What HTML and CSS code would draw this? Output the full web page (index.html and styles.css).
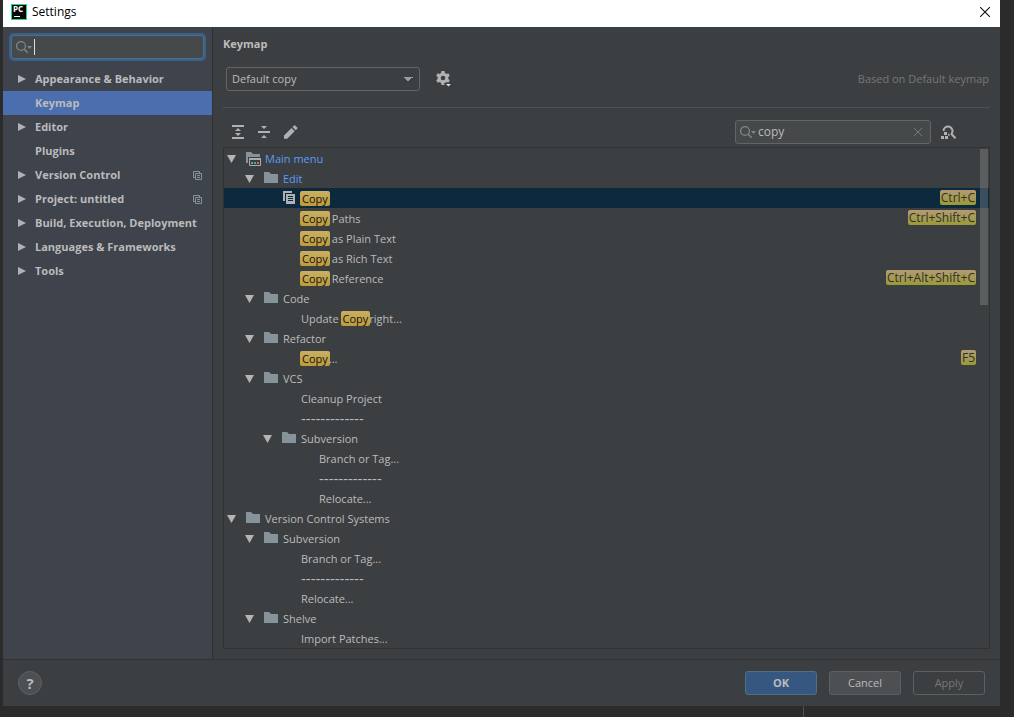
FILE: index.html
```
<!DOCTYPE html>
<html lang="en">
<head>
<meta charset="utf-8">
<title>Settings</title>
<link rel="stylesheet" href="styles.css">
</head>
<body>
<svg class="sprite" aria-hidden="true">
  <symbol id="right" viewBox="0 0 8 8"><path d="M0 0v8l8-4z" fill="#afb1b3"/></symbol>
  <symbol id="down" viewBox="0 0 9 8"><path d="M0 0h9L4.500 8z" fill="#b4b4b4"/></symbol>
  <symbol id="folder" viewBox="0 0 14 11"><path d="M0 0h5l2 2h7v9H0z" fill="#87939a"/></symbol>
  <symbol id="menufolder" viewBox="0 0 16 14"><path d="M0 0h5l2 2h7v3H2v6H0z" fill="#87939a"/><path d="M3.500 6.500h11v7h-11z" fill="none" stroke="#a5adb2"/><path d="M3 6h12v2H3z" fill="#a5adb2"/><path d="M5 10h2v2H5z" fill="#62b543"/><path d="M8 10h2v2H8z" fill="#40a0d8"/><path d="M11 10h2v2h-2z" fill="#d86a38"/></symbol>
  <symbol id="copy" viewBox="0 0 12 13"><path d="M0 0h9v2H2v8H0z" fill="#afb1b3"/><path d="M3 3h9v10H3z" fill="#afb1b3"/><path d="M5 5.500h5M5 7.500h5M5 9.500h5" stroke="#0d293e"/></symbol>
  <symbol id="scope" viewBox="0 0 9 9"><path d="M.5 6.500v-6h6V2M2.500 2.500h6v6h-6zM4 4.500h3M4 6.500h3M.5 6.500H2" fill="none" stroke="#87939a"/></symbol>
  <symbol id="search" viewBox="0 0 16 13"><circle cx="5" cy="5" r="4.400" fill="none" stroke="#7c878d" stroke-width="1.300"/><path d="M8.200 8.200l3.500 3.600" stroke="#7c878d" stroke-width="1.500"/><path d="M11 5h5l-2.500 3z" fill="#7c878d"/></symbol>
</svg>
<div class="dialog">
  <header class="titlebar">
    <svg class="logo" viewBox="0 0 16 16"><path d="M0 0h16v16H0z" fill="#21d789"/><path d="M1 1h14v14H1z" fill="#080808"/><text x="2" y="8" class="logo-text">PC</text><path d="M3 12h6v1H3z" fill="#fff"/></svg>
    <span>Settings</span>
    <button class="close" aria-label="Close"><svg width="10" height="10" viewBox="0 0 10 10"><path d="M0 0l10 10M10 0L0 10" stroke="#111" stroke-width="1.100"/></svg></button>
  </header>
  <div class="body">
    <nav class="sidebar">
      <label class="field focused"><svg class="i-search"><use href="#search"/></svg><span class="caret"></span><input type="text" aria-label="Search settings"></label>
      <ul class="nav">
        <li><svg class="i-right"><use href="#right"/></svg><a href="#">Appearance &amp; Behavior</a></li>
        <li class="current"><a href="#">Keymap</a></li>
        <li><svg class="i-right"><use href="#right"/></svg><a href="#">Editor</a></li>
        <li><a href="#">Plugins</a></li>
        <li><svg class="i-right"><use href="#right"/></svg><a href="#">Version Control</a><svg class="i-scope"><use href="#scope"/></svg></li>
        <li><svg class="i-right"><use href="#right"/></svg><a href="#">Project: untitled</a><svg class="i-scope"><use href="#scope"/></svg></li>
        <li><svg class="i-right"><use href="#right"/></svg><a href="#">Build, Execution, Deployment</a></li>
        <li><svg class="i-right"><use href="#right"/></svg><a href="#">Languages &amp; Frameworks</a></li>
        <li><svg class="i-right"><use href="#right"/></svg><a href="#">Tools</a></li>
      </ul>
    </nav>
    <main class="content">
      <h1>Keymap</h1>
      <div class="scheme">
        <select aria-label="Keymap scheme"><option>Default copy</option></select>
        <button class="tool" aria-label="Scheme actions"><svg width="16" height="16" viewBox="0 0 16 16"><path d="M5.500 0h3l.4 2 1.500.9 1.900-.7 1.500 2.600-1.500 1.300v1.800l1.500 1.300-1.500 2.600-1.900-.7-1.500.9-.4 2h-3l-.4-2-1.500-.9-1.900.7L.2 9.200l1.500-1.300V6.100L.2 4.800l1.500-2.600 1.900.7L5.100 2zM7 4.700a2.300 2.300 0 100 4.600 2.300 2.300 0 000-4.600z" fill="#afb1b3" fill-rule="evenodd"/><path d="M10 13h5l-2.500 2.500z" fill="#ddd" stroke="#3c3f41" stroke-width="2" paint-order="stroke"/></svg></button>
        <span class="based">Based on Default keymap</span>
      </div>
      <div class="toolbar">
        <button class="tool" aria-label="Expand all"><svg width="12" height="14" viewBox="0 0 12 14"><path d="M0 0h12v2H0zM0 12h12v2H0zM3 6l3-3 3 3zM3 8h6l-3 3z" fill="#afb1b3"/></svg></button>
        <button class="tool" aria-label="Collapse all"><svg width="12" height="14" viewBox="0 0 12 14"><path d="M0 6h12v2H0zM3 1h6L6 4zM3 13l3-3 3 3z" fill="#afb1b3"/></svg></button>
        <button class="tool" aria-label="Edit shortcut"><svg width="14" height="14" viewBox="0 0 14 14"><path d="M0 10.500L7.500 3l3.200 3.200L3.200 13.700H0zM8.500 2L10 .5q.6-.6 1.200 0l2 2q.6.600 0 1.200l-1.500 1.500z" fill="#afb1b3"/></svg></button>
        <label class="field filter"><svg class="i-search"><use href="#search"/></svg><input type="text" value="copy" aria-label="Filter actions"><svg width="8" height="8" viewBox="0 0 8 8"><path d="M0 0l8 8M8 0L0 8" stroke="#72777a"/></svg></label>
        <button class="tool" aria-label="Find by shortcut"><svg width="16" height="15" viewBox="0 0 16 15"><path d="M2.500 6a4.500 4.500 0 118 2.800M7 9.800l1.500 0M10 8.500l4.500 4.800" fill="none" stroke="#afb1b3" stroke-width="2"/><path d="M3 7h3v3H3zM0 11h3v3H0zM4 11h3v3H4z" fill="#afb1b3"/></svg></button>
      </div>
      <div class="tree">
        <ul>
          <li class="l0 changed"><svg class="i-down"><use href="#down"/></svg><svg class="i-menu"><use href="#menufolder"/></svg>Main menu</li>
          <li class="l1 changed"><svg class="i-down"><use href="#down"/></svg><svg class="i-folder"><use href="#folder"/></svg>Edit</li>
          <li class="l2 selected"><svg class="i-copy"><use href="#copy"/></svg><mark>Copy</mark><kbd>Ctrl+C</kbd></li>
          <li class="l2 leaf"><mark>Copy</mark><span class="rest">Paths</span><kbd>Ctrl+Shift+C</kbd></li>
          <li class="l2 leaf"><mark>Copy</mark><span class="rest">as Plain Text</span></li>
          <li class="l2 leaf"><mark>Copy</mark><span class="rest">as Rich Text</span></li>
          <li class="l2 leaf"><mark>Copy</mark><span class="rest">Reference</span><kbd>Ctrl+Alt+Shift+C</kbd></li>
          <li class="l1"><svg class="i-down"><use href="#down"/></svg><svg class="i-folder"><use href="#folder"/></svg>Code</li>
          <li class="l2 leaf"><span>Update&nbsp;</span><mark>Copy</mark>right...</li>
          <li class="l1"><svg class="i-down"><use href="#down"/></svg><svg class="i-folder"><use href="#folder"/></svg>Refactor</li>
          <li class="l2 leaf"><mark>Copy</mark>...<kbd>F5</kbd></li>
          <li class="l1"><svg class="i-down"><use href="#down"/></svg><svg class="i-folder"><use href="#folder"/></svg>VCS</li>
          <li class="l2 leaf">Cleanup Project</li>
          <li class="l2 leaf dashes">-------------</li>
          <li class="l2"><svg class="i-down"><use href="#down"/></svg><svg class="i-folder"><use href="#folder"/></svg>Subversion</li>
          <li class="l3 leaf">Branch or Tag...</li>
          <li class="l3 leaf dashes">-------------</li>
          <li class="l3 leaf">Relocate...</li>
          <li class="l0"><svg class="i-down"><use href="#down"/></svg><svg class="i-folder"><use href="#folder"/></svg>Version Control Systems</li>
          <li class="l1"><svg class="i-down"><use href="#down"/></svg><svg class="i-folder"><use href="#folder"/></svg>Subversion</li>
          <li class="l2 leaf">Branch or Tag...</li>
          <li class="l2 leaf dashes">-------------</li>
          <li class="l2 leaf">Relocate...</li>
          <li class="l1"><svg class="i-down"><use href="#down"/></svg><svg class="i-folder"><use href="#folder"/></svg>Shelve</li>
          <li class="l2 leaf">Import Patches...</li>
        </ul>
        <div class="thumb"></div>
      </div>
    </main>
  </div>
  <footer class="footer">
    <button class="help" aria-label="Help">?</button>
    <button class="btn primary">OK</button>
    <button class="btn">Cancel</button>
    <button class="btn" disabled>Apply</button>
  </footer>
</div>
<div class="behind"></div>
</body>
</html>
```
FILE: styles.css
```
* { box-sizing: border-box; }
body {
  margin: 0;
  height: 100vh;
  display: flex;
  flex-direction: column;
  padding: 0 14px 0 3px;
  background: #2b2b2b;
  color: #bbbbbb;
  font: 11px/16px "Open Sans", "Noto Sans", sans-serif;
  overflow: hidden;
}
button, input, select { font: inherit; color: inherit; }
button { padding: 0; border: 0; background: none; }
ul { list-style: none; margin: 0; padding: 0; }
a { color: inherit; text-decoration: none; }
svg { flex: none; display: block; }
.sprite { position: absolute; width: 0; height: 0; }

.dialog { flex: 1; min-height: 0; display: flex; flex-direction: column; background: #3c3f41; }
.titlebar {
  display: flex;
  align-items: center;
  gap: 5px;
  height: 27px;
  padding: 0 10px 3px 8px;
  background: #fff;
  color: #000;
  font-size: 12px;
}
.logo { width: 16px; height: 16px; }
.logo-text { font: bold 8px "Open Sans", sans-serif; fill: #fff; }
.close { margin-left: auto; }

.body { flex: 1; min-height: 0; display: flex; }
.sidebar { flex: none; width: 210px; background: #3f434c; border-right: 1px solid #323232; }
.field {
  display: flex;
  align-items: center;
  height: 24px;
  padding: 0 8px 0 4px;
  background: #45494a;
  border: 1px solid #646464;
  border-radius: 3px;
}
.field input { flex: 1; min-width: 0; padding: 0; border: 0; outline: 0; background: none; font-size: 12px; }
.focused { margin: 8px 8px; border-color: #466d94; box-shadow: 0 0 0 2px #3d6185; }
.caret { width: 1px; height: 16px; margin-left: 2px; background: #ddd; }
.i-search { width: 16px; height: 13px; }
.nav li { display: flex; align-items: center; height: 24px; padding: 0 10px 0 32px; font-weight: bold; white-space: nowrap; }
.nav .i-right { width: 8px; height: 8px; margin: 0 9px 0 -17px; }
.nav .current { background: #4b6eaf; }
.i-scope { width: 9px; height: 9px; margin-left: auto; }

.content { flex: 1; min-width: 0; display: flex; flex-direction: column; padding: 9px 10px 10px; }
h1 { margin: 0; font-size: 11px; line-height: 16px; }
.scheme { display: flex; align-items: center; height: 56px; padding: 0 1px 1px 3px; border-bottom: 1px solid #515151; }
select {
  width: 194px;
  height: 24px;
  padding: 0 5px;
  appearance: none;
  border: 1px solid #646464;
  border-radius: 3px;
  background: conic-gradient(from -45deg at 50% 100%, #9a9da0 90deg, transparent 0) no-repeat right 6px center / 10px 5px;
}
.scheme .tool { margin-left: 16px; }
.based { margin-left: auto; color: #777777; }
.toolbar { display: flex; align-items: center; gap: 14px; height: 39px; padding: 11px 33px 2px 9px; }
.filter { width: 196px; margin-left: auto; }
.filter input { margin-left: 2px; }
.toolbar .tool:last-child { margin-left: -4px; }

.tree { position: relative; flex: 1; min-height: 0; overflow: hidden; border: 1px solid #323232; }
.tree li { display: flex; align-items: center; height: 20px; padding-top: 1px; padding-right: 13px; line-height: 18px; }
.tree .l0 { padding-left: 3px; }
.tree .l1 { padding-left: 21px; }
.tree .l2 { padding-left: 39px; }
.tree .l3 { padding-left: 57px; }
.tree .l2.leaf { padding-left: 77px; }
.tree .l3.leaf { padding-left: 95px; }
.tree .l2.selected { padding-left: 59px; background: #0d293e; }
.changed { color: #589df6; }
.tree .dashes { padding-top: 0; font-size: 15px; }
.i-down { width: 9px; height: 8px; margin-right: 10px; }
.i-folder { width: 14px; height: 11px; margin: 0 5px 2px 0; }
.i-menu { width: 16px; height: 14px; margin-right: 3px; }
.i-copy { width: 12px; height: 13px; margin: 0 6px 2px 0; }
mark {
  margin: 0 -1px;
  padding: 0 2px;
  line-height: 15px;
  border-radius: 2px;
  background: linear-gradient(#c9b063, #bf9b38);
  color: #111;
}
.rest { margin-left: 3px; }
kbd {
  margin: 0 0 2px auto;
  padding: 0 1px;
  font: inherit;
  font-size: 12px;
  line-height: 15px;
  border-radius: 2px;
  background: linear-gradient(#b39b72, #9a9a38);
  color: #30302a;
}
.thumb { position: absolute; top: 1px; right: 1px; width: 8px; height: 156px; background: rgba(166, 166, 166, .3); }

.footer { display: flex; align-items: center; gap: 12px; height: 47px; padding: 0 15px; border-top: 1px solid #323232; }
.help {
  width: 24px;
  height: 24px;
  margin-right: auto;
  border: 1px solid #5e6162;
  border-radius: 50%;
  background: #4c5052;
  font-size: 15px;
  font-weight: bold;
}
.btn { width: 72px; height: 24px; border: 1px solid #5e6060; border-radius: 3px; background: #4c5052; }
.primary { border-color: #4c708c; background: #365880; font-weight: bold; }
.btn:disabled { background: none; color: #777777; }
.behind { flex: none; height: 11px; margin-left: 800px; border-left: 1px solid #515151; }
```
